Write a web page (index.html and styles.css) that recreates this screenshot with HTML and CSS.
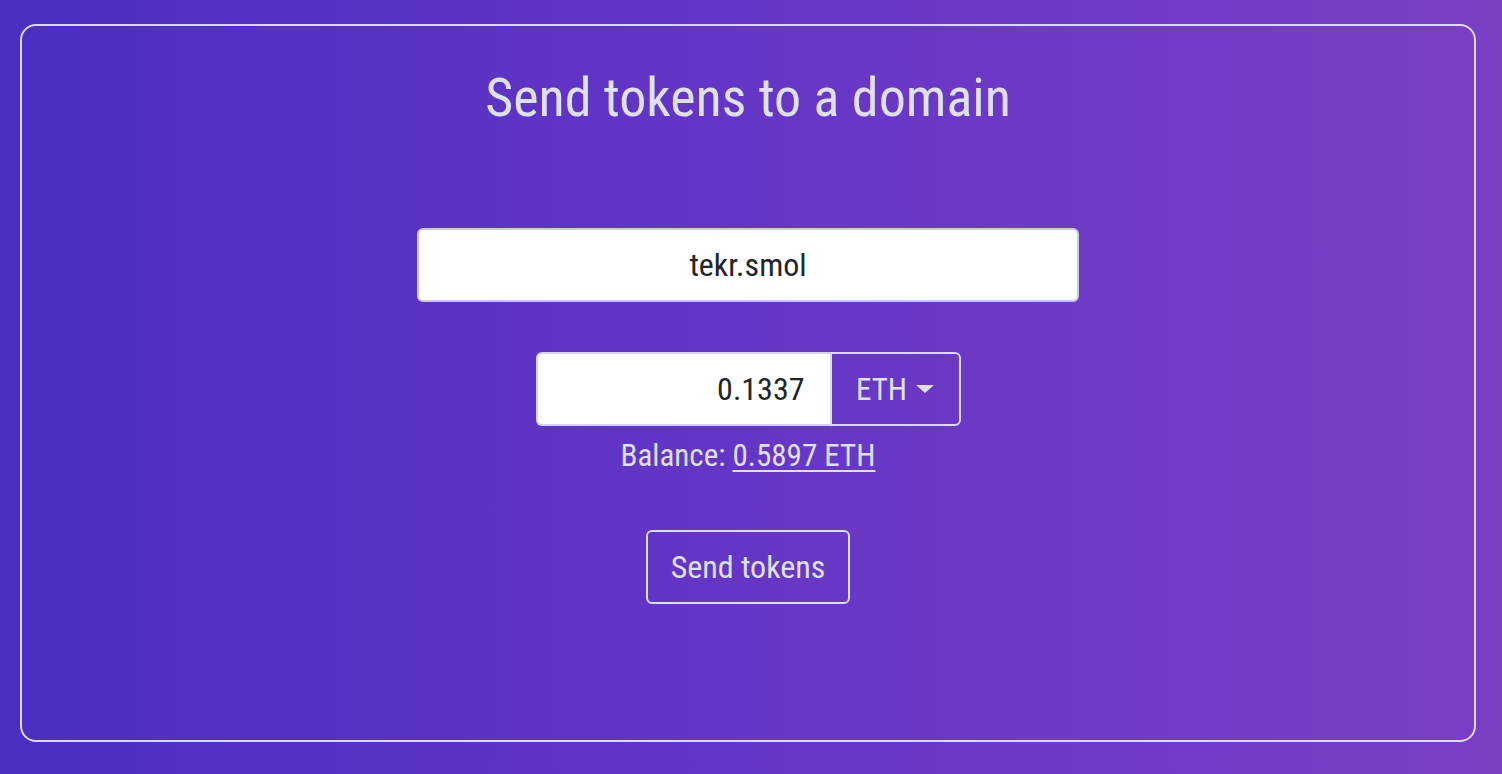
FILE: index.html
```html
<!DOCTYPE html>
<html>
<head>
<meta charset="utf-8">
<link rel="stylesheet" href="styles.css">
</head>
<body>
<div class="card">
  <h1 class="title">Send tokens to a domain</h1>
  <div class="form">
    <div class="domain-input">tekr.smol</div>
    <div class="amount-group">
      <div class="amount-input">0.1337</div>
      <div class="token-select">ETH <span class="caret"></span></div>
    </div>
    <div class="balance">Balance: <a class="balance-link">0.5897 ETH</a></div>
    <div class="send-btn">Send tokens</div>
  </div>
</div>
</body>
</html>
```
FILE: styles.css
```css
html, body { height: 100%; }
body {
  margin: 0;
  background: linear-gradient(90deg, #4b2ec2 0%, #6a38c6 60%, #7b3fc5 100%);
  font-family: "Roboto Condensed", Roboto, sans-serif;
  font-stretch: condensed;
  color: #dfe1f0;
  padding: 24px 26px 32px 20px;
  box-sizing: border-box;
}
.card {
  height: 718px;
  box-sizing: border-box;
  border: 2px solid #dcdcef;
  border-radius: 16px;
  padding-top: 40px;
  display: flex;
  flex-direction: column;
  align-items: center;
}
.title {
  margin: 0;
  font-weight: 400;
  font-size: 54px;
  line-height: 64px;
}
.form {
  margin-top: 98px;
  display: flex;
  flex-direction: column;
  align-items: center;
}
.domain-input {
  width: 662px;
  height: 74px;
  box-sizing: border-box;
  background: #fff;
  border: 2px solid #c9c9df;
  border-radius: 6px;
  color: #212529;
  font-size: 32px;
  display: flex;
  align-items: center;
  justify-content: center;
}
.amount-group {
  margin-top: 50px;
  display: flex;
  height: 74px;
}
.amount-input {
  width: 294px;
  box-sizing: border-box;
  background: #fff;
  border: 2px solid #d6d6ea;
  border-right: none;
  border-radius: 6px 0 0 6px;
  color: #212529;
  font-size: 32px;
  display: flex;
  align-items: center;
  justify-content: flex-end;
  padding-right: 25px;
}
.token-select {
  width: 131px;
  box-sizing: border-box;
  border: 2px solid #dcdcef;
  border-radius: 0 6px 6px 0;
  font-size: 31px;
  display: flex;
  align-items: center;
  justify-content: center;
  gap: 9px;
}
.caret {
  width: 0; height: 0;
  border-left: 9px solid transparent;
  border-right: 9px solid transparent;
  border-top: 8px solid #dfe1f0;
}
.balance {
  margin-top: 12px;
  font-size: 31px;
  line-height: 36px;
}
.balance-link { text-decoration: underline; text-decoration-thickness: 2px; text-underline-offset: 4px; }
.send-btn {
  margin-top: 56px;
  height: 74px;
  box-sizing: border-box;
  padding: 0 23px;
  border: 2px solid #dcdcef;
  border-radius: 6px;
  font-size: 32px;
  display: flex;
  align-items: center;
}
```
